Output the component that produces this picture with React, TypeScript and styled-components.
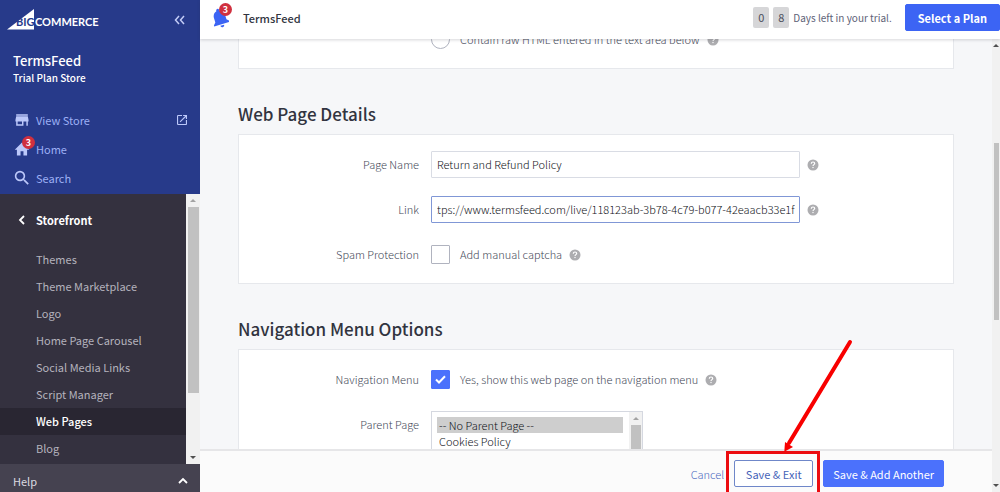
import React, { useEffect, useRef } from "react";
import styled, { createGlobalStyle, css } from "styled-components";

const GlobalStyle = createGlobalStyle`
  *, *::before, *::after { box-sizing: border-box; }
  body {
    margin: 0;
    color: #444857;
    background: #f6f7f9;
    font-family: "Noto Sans CJK SC", "Noto Sans", sans-serif;
    font-size: 11px;
    line-height: 20px;
  }
  button, input, select { font: inherit; margin: 0; }
  a { color: inherit; text-decoration: none; }
`;

const Shell = styled.div`
  display: grid;
  grid-template-columns: 200px minmax(0, 1fr);
  height: 100vh;
  overflow: hidden;
`;

/* ---------- sidebar ---------- */

const Sidebar = styled.aside`
  display: flex;
  flex-direction: column;
  min-height: 0;
  background: #273a8a;
`;

const Brand = styled.div`
  display: flex;
  align-items: center;
  justify-content: space-between;
  height: 39px;
  padding: 0 14px 0 6px;
`;

const IconButton = styled.button`
  display: flex;
  padding: 0;
  border: 0;
  background: none;
  color: #c3ccf7;
`;

const StoreInfo = styled.div`
  padding: 11px 13px 0;
  color: #fff;
`;

const StoreName = styled.div`
  font-size: 13px;
  line-height: 22px;
  font-weight: 500;
`;

const StorePlan = styled.div`
  font-size: 10px;
  line-height: 12px;
  font-weight: 500;
`;

const PrimaryNav = styled.nav`
  display: flex;
  flex-direction: column;
  padding: 21px 13px 2px 14px;
`;

const PrimaryLink = styled.a`
  display: flex;
  align-items: center;
  gap: 6px;
  height: 29px;
  color: #9db0f5;
  & > span:nth-child(2) { flex: 1; }
`;

const IconSlot = styled.span`
  position: relative;
  display: flex;
  color: #bcc8fa;
`;

const Badge = styled.span<{ $inset?: boolean }>`
  position: absolute;
  top: -5px;
  right: ${(p) => (p.$inset ? -3 : -5)}px;
  width: 13px;
  height: 13px;
  border-radius: 50%;
  background: #d0303f;
  color: #fff;
  font-size: 9px;
  line-height: 13px;
  font-weight: 700;
  text-align: center;
`;

const SubPanel = styled.div`
  display: flex;
  flex: 1;
  min-height: 0;
  background: #34313f;
`;

const SubNav = styled.nav`
  flex: 1;
  min-width: 0;
  overflow: hidden;
  padding-top: 16px;
`;

const SubTitle = styled.a`
  display: flex;
  align-items: center;
  gap: 7px;
  height: 20px;
  margin-bottom: 16px;
  padding-left: 14px;
  color: #fff;
  font-weight: 700;
`;

const SubLink = styled.a<{ $active?: boolean }>`
  display: block;
  height: 27px;
  padding-left: 36px;
  line-height: 27px;
  color: #b4b3bd;
  ${(p) => p.$active && css`
    color: #fff;
    background: #292632;
    font-weight: 500;
  `}
`;

const HelpBar = styled.button`
  display: flex;
  align-items: center;
  justify-content: space-between;
  height: 28px;
  flex: none;
  padding: 5px 12px 0 13px;
  border: 0;
  background: #454250;
  color: #dcdbe2;
  text-align: left;
`;

/* ---------- scrollbars ---------- */

const Track = styled.div<{ $width: number }>`
  display: flex;
  flex-direction: column;
  align-items: center;
  flex: none;
  width: ${(p) => p.$width}px;
  overflow: hidden;
  background: #f1f1f1;
`;

const ArrowCell = styled.span<{ $color: string; $down?: boolean }>`
  display: flex;
  align-items: center;
  justify-content: center;
  flex: none;
  height: 13px;
  &::before {
    content: "";
    border: 3px solid transparent;
    ${(p) => p.$down
      ? css`border-top-color: ${p.$color}; border-bottom: 0;`
      : css`border-bottom-color: ${p.$color}; border-top: 0;`}
  }
`;

const Spacer = styled.span<{ $grow: number }>`
  flex: ${(p) => p.$grow} 0 0;
`;

const Thumb = styled.span<{ $grow: number }>`
  flex: ${(p) => p.$grow} 0 0;
  width: calc(100% - 3px);
  background: #c1c1c1;
`;

/* ---------- top bar ---------- */

const Main = styled.div`
  display: flex;
  flex-direction: column;
  min-width: 0;
  min-height: 0;
`;

const TopBar = styled.header`
  display: flex;
  align-items: center;
  flex: none;
  height: 39px;
  padding: 0 0 4px 11px;
  background: #fff;
  box-shadow: 0 1px 3px rgba(49, 52, 64, 0.2);
  z-index: 1;
`;

const TopTitle = styled.span`
  flex: 1;
  margin-left: 14px;
  color: #313440;
  font-weight: 500;
`;

const Trial = styled.div`
  display: flex;
  align-items: center;
  gap: 4px;
  margin-right: 13px;
  color: #5e6378;
  font-size: 10px;
`;

const Digit = styled.span`
  width: 16px;
  height: 21px;
  border-radius: 2px;
  background: #d6d6d8;
  color: #4c4f5c;
  font-size: 11px;
  line-height: 21px;
  text-align: center;
`;

const Button = styled.button<{ $primary?: boolean }>`
  min-width: 79px;
  height: 27px;
  padding: 0 9px;
  border: 1px solid ${(p) => (p.$primary ? "#4b71fc" : "#6f87c9")};
  border-radius: 2px;
  background: ${(p) => (p.$primary ? "#4b71fc" : "#fff")};
  color: ${(p) => (p.$primary ? "#fff" : "#4562b8")};
  font-weight: 400;
  line-height: 20px;
  white-space: nowrap;
`;

const PlanButton = styled(Button)`
  padding: 0 12px;
  border-color: #3c64f4;
  background: #3c64f4;
  font-weight: 700;
`;

/* ---------- content ---------- */

const Body = styled.div`
  display: flex;
  flex: 1;
  min-height: 0;
`;

const Column = styled.div`
  display: flex;
  flex-direction: column;
  flex: 1;
  min-width: 0;
`;

const Viewport = styled.main`
  flex: 1;
  min-height: 0;
  overflow: hidden;
`;

const Form = styled.form`
  margin-top: -20px;
  padding: 0 38px;
  font-weight: 300;
`;

const Card = styled.section`
  display: flex;
  flex-direction: column;
  gap: 18px;
  padding: 16px 0 15px;
  border: 1px solid #e6e8ec;
  background: #fff;
`;

const OptionsCard = styled(Card)`
  padding: 6px 0 15px;
`;

const Heading = styled.h2`
  margin: 0;
  padding: 31px 0 7px;
  color: #313440;
  font-size: 17px;
  line-height: 27px;
  font-weight: 500;
`;

const Row = styled.div<{ $top?: boolean }>`
  display: grid;
  grid-template-columns: 180px minmax(0, 1fr);
  align-items: ${(p) => (p.$top ? "start" : "center")};
  column-gap: 12px;
  min-height: 27px;
`;

const Label = styled.label`
  padding-bottom: 2px;
  text-align: right;
`;

const ListLabel = styled(Label)`
  padding-top: 3px;
`;

const Field = styled.div`
  display: flex;
  align-items: center;
  gap: 7px;
`;

const ChoiceLabel = styled.label`
  display: flex;
  align-items: center;
  gap: 10px;
`;

const ChoiceText = styled.span`
  padding-bottom: 2px;
`;

const TextInput = styled.input<{ $focus?: boolean }>`
  width: 369px;
  max-width: 100%;
  height: 27px;
  padding: 0 4px 1px 5px;
  border: 1px solid ${(p) => (p.$focus ? "#8097d6" : "#d9dce4")};
  border-radius: 1px;
  outline: 0;
  background: #fff;
  color: #101218;
`;

const choiceBox = css`
  appearance: none;
  width: 19px;
  height: 19px;
  border: 1px solid #b0b3bf;
  background: #fff;
`;

const Radio = styled.input.attrs({ type: "radio" })`
  ${choiceBox}
  border-radius: 50%;
`;

const CheckWrap = styled.span`
  display: grid;
  & > * { grid-area: 1 / 1; place-self: center; }
  & > svg { pointer-events: none; }
`;

const Check = styled.input.attrs({ type: "checkbox" })`
  ${choiceBox}
  border-radius: 1px;
  &:checked {
    border-color: #4b71fc;
    background: #4b71fc;
  }
`;

const ListBox = styled.div`
  display: flex;
  width: 212px;
  border: 1px solid #d5d8e0;
  background: #fff;
`;

const PageSelect = styled.select`
  flex: 1;
  min-width: 0;
  height: 96px;
  padding: 5px 6px 0 5px;
  border: 0;
  outline: 0;
  background: #fff;
  color: #101218;
  overflow: hidden;
  scrollbar-width: none;
  option {
    min-height: 16px;
    padding: 0 2px;
    font-weight: 300;
    line-height: 16px;
  }
  option:checked {
    background: #cecece linear-gradient(#cecece, #cecece);
    color: #101218;
  }
`;

/* ---------- footer ---------- */

const Footer = styled.footer`
  display: flex;
  align-items: center;
  justify-content: flex-end;
  gap: 10px;
  flex: none;
  height: 43px;
  padding: 4px 48px 0 0;
  border-top: 2px solid #e6e6e8;
  background: #fbfbfb;
`;

const CancelLink = styled.a`
  color: #4a68c0;
  font-weight: 300;
`;

const Highlight = styled.span`
  position: relative;
  display: flex;
`;

const Marker = styled.svg`
  position: absolute;
  left: -9px;
  bottom: -9px;
  overflow: visible;
  pointer-events: none;
  z-index: 2;
`;

/* ---------- drawings ---------- */

const Logo = () => (
  <svg width="94" height="24" viewBox="0 0 94 24" role="img" aria-label="BigCommerce">
    <path d="M28 1V21.500H1Z" fill="#fff" />
    <text x="10" y="18" fontFamily="Lato, sans-serif" fontWeight="700" fontSize="11" fill="#273a8a">BIG</text>
    <text x="29" y="18" fontFamily="Lato, sans-serif" fontWeight="700" fontSize="11" fill="#fff">COMMERCE</text>
  </svg>
);

const StoreIcon = () => (
  <svg width="16" height="16" viewBox="1 1 22 22" fill="currentColor">
    <path d="M20 4H4v2h16V4zm1 10v-2l-1-5H4l-1 5v2h1v6h10v-6h4v6h2v-6h1zm-9 4H6v-4h6v4z" />
  </svg>
);

const HomeIcon = () => (
  <svg width="16" height="16" viewBox="1 1 22 22" fill="currentColor">
    <path d="M10 21v-6h4v6h5v-8h3L12 3 2 13h3v8z" />
  </svg>
);

const SearchIcon = () => (
  <svg width="16" height="16" viewBox="2 2 20 20" fill="currentColor">
    <path d="M15.500 14h-.79l-.28-.27A6.470 6.470 0 0 0 16 9.500 6.500 6.500 0 1 0 9.500 16c1.610 0 3.090-.59 4.230-1.570l.27.28v.79l5 4.990L20.490 19l-4.990-5zm-6 0C7.010 14 5 11.990 5 9.500S7.010 5 9.500 5 14 7.010 14 9.500 11.990 14 9.500 14z" />
  </svg>
);

const ExternalIcon = () => (
  <svg width="10" height="10" viewBox="3 3 18 18" fill="#bcc8fa">
    <path d="M19 19H5V5h7V3H5a2 2 0 0 0-2 2v14a2 2 0 0 0 2 2h14c1.100 0 2-.9 2-2v-7h-2v7zM14 3v2h3.590l-9.830 9.830 1.410 1.410L19 6.410V10h2V3h-7z" />
  </svg>
);

const CollapseIcon = () => (
  <svg width="12" height="10" viewBox="0 0 12 10" fill="none" stroke="currentColor" strokeWidth="1.500">
    <path d="M5 1 1.500 5 5 9M10 1 6.500 5 10 9" />
  </svg>
);

const BackIcon = () => (
  <svg width="15" height="10" viewBox="0 0 15 10" fill="none" stroke="currentColor" strokeWidth="1.800">
    <path d="M10 1 6 5 10 9" />
  </svg>
);

const UpIcon = () => (
  <svg width="10" height="7" viewBox="0 0 10 7" fill="none" stroke="#fff" strokeWidth="1.800">
    <path d="M1 6 5 2 9 6" />
  </svg>
);

const BellIcon = () => (
  <svg width="18" height="20" viewBox="0 0 18 20" fill="#3c64f4">
    <g transform="rotate(-17 9 10)">
      <path d="M9 0.500C9.900 .5 10.500 1.100 10.500 2v.6C13.200 3.300 14.800 5.600 14.800 8.300V13l2.200 2.300V16.500H1V15.300L3.200 13V8.300C3.200 5.600 4.800 3.300 7.500 2.600V2C7.500 1.100 8.100.5 9 .5Z" />
      <path d="M7 17.600h4a2 2 0 0 1-4 0Z" />
    </g>
  </svg>
);

const HelpIcon = () => (
  <svg width="12" height="12" viewBox="0 0 12 12" role="img" aria-label="Help">
    <circle cx="6" cy="6" r="5.500" fill="#adadb0" />
    <path d="M4.300 4.700C4.300 3.600 5 3 6 3s1.700.6 1.700 1.500C7.700 5.600 6 5.700 6 7" fill="none" stroke="#fff" strokeWidth="1.200" />
    <rect x="5.400" y="7.900" width="1.200" height="1.200" fill="#fff" />
  </svg>
);

const CheckIcon = () => (
  <svg width="11" height="9" viewBox="0 0 11 9" fill="none" stroke="#fff" strokeWidth="2">
    <path d="M1 4.500 4 7.500 10 1.200" />
  </svg>
);

const ArrowMarker = () => (
  <Marker width="93" height="152" viewBox="0 0 93 152" aria-hidden="true">
    <rect x="2.500" y="108.500" width="91" height="50" fill="none" stroke="#ec0c10" strokeWidth="3" />
    <path d="M125 -2 64 99" stroke="#f80000" strokeWidth="4" strokeLinecap="round" />
    <path d="M59.300 107.700 60 98 68 103Z" fill="#f80000" />
  </Marker>
);

const subLinks = [
  "Themes",
  "Theme Marketplace",
  "Logo",
  "Home Page Carousel",
  "Social Media Links",
  "Script Manager",
  "Web Pages",
  "Blog",
];

export default function App() {
  const linkRef = useRef<HTMLInputElement>(null);

  // The link field shows the end of its long address.
  useEffect(() => {
    const el = linkRef.current;
    if (el) el.scrollLeft = el.scrollWidth;
  }, []);

  return (
    <>
      <GlobalStyle />
      <Shell>
        <Sidebar>
          <Brand>
            <Logo />
            <IconButton aria-label="Collapse menu"><CollapseIcon /></IconButton>
          </Brand>
          <StoreInfo>
            <StoreName>TermsFeed</StoreName>
            <StorePlan>Trial Plan Store</StorePlan>
          </StoreInfo>
          <PrimaryNav>
            <PrimaryLink href="#store">
              <IconSlot><StoreIcon /></IconSlot>
              <span>View Store</span>
              <ExternalIcon />
            </PrimaryLink>
            <PrimaryLink href="#home">
              <IconSlot><HomeIcon /><Badge>3</Badge></IconSlot>
              <span>Home</span>
            </PrimaryLink>
            <PrimaryLink href="#search">
              <IconSlot><SearchIcon /></IconSlot>
              <span>Search</span>
            </PrimaryLink>
          </PrimaryNav>
          <SubPanel>
            <SubNav>
              <SubTitle href="#storefront"><BackIcon />Storefront</SubTitle>
              {subLinks.map((name) => (
                <SubLink key={name} href="#sub" $active={name === "Web Pages"}>{name}</SubLink>
              ))}
            </SubNav>
            <Track $width={14}>
              <ArrowCell $color="#a3a3a3" />
              <Thumb $grow={186} />
              <Spacer $grow={58} />
              <ArrowCell $color="#505050" $down />
            </Track>
          </SubPanel>
          <HelpBar>Help<UpIcon /></HelpBar>
        </Sidebar>

        <Main>
          <TopBar>
            <IconSlot><BellIcon /><Badge $inset>3</Badge></IconSlot>
            <TopTitle>TermsFeed</TopTitle>
            <Trial>
              <Digit>0</Digit>
              <Digit>8</Digit>
              <span>Days left in your trial.</span>
            </Trial>
            <PlanButton $primary>Select a Plan</PlanButton>
          </TopBar>
          <Body>
            <Column>
              <Viewport>
                <Form>
                  <OptionsCard>
                    <Row>
                      <span />
                      <Field>
                        <ChoiceLabel>
                          <Radio name="kind" />
                          <ChoiceText>Contain raw HTML entered in the text area below</ChoiceText>
                        </ChoiceLabel>
                        <HelpIcon />
                      </Field>
                    </Row>
                  </OptionsCard>

                  <Heading>Web Page Details</Heading>
                  <Card>
                    <Row>
                      <Label htmlFor="page-name">Page Name</Label>
                      <Field>
                        <TextInput id="page-name" defaultValue="Return and Refund Policy" />
                        <HelpIcon />
                      </Field>
                    </Row>
                    <Row>
                      <Label htmlFor="link">Link</Label>
                      <Field>
                        <TextInput
                          id="link"
                          ref={linkRef}
                          $focus
                          defaultValue="https://www.termsfeed.com/live/118123ab-3b78-4c79-b077-42eaacb33e1f"
                        />
                        <HelpIcon />
                      </Field>
                    </Row>
                    <Row>
                      <Label htmlFor="captcha">Spam Protection</Label>
                      <Field>
                        <ChoiceLabel>
                          <CheckWrap><Check id="captcha" /></CheckWrap>
                          <ChoiceText>Add manual captcha</ChoiceText>
                        </ChoiceLabel>
                        <HelpIcon />
                      </Field>
                    </Row>
                  </Card>

                  <Heading>Navigation Menu Options</Heading>
                  <Card>
                    <Row>
                      <Label htmlFor="nav-menu">Navigation Menu</Label>
                      <Field>
                        <ChoiceLabel>
                          <CheckWrap><Check id="nav-menu" defaultChecked /><CheckIcon /></CheckWrap>
                          <ChoiceText>Yes, show this web page on the navigation menu</ChoiceText>
                        </ChoiceLabel>
                        <HelpIcon />
                      </Field>
                    </Row>
                    <Row $top>
                      <ListLabel htmlFor="parent">Parent Page</ListLabel>
                      <ListBox>
                        <PageSelect id="parent" size={5} defaultValue="none">
                          <option value="none">-- No Parent Page --</option>
                          <option value="cookies">Cookies Policy</option>
                        </PageSelect>
                        <Track $width={13}>
                          <ArrowCell $color="#a3a3a3" />
                          <Thumb $grow={1} />
                        </Track>
                      </ListBox>
                    </Row>
                  </Card>
                </Form>
              </Viewport>
              <Footer>
                <CancelLink href="#cancel">Cancel</CancelLink>
                <Highlight>
                  <Button>Save &amp; Exit</Button>
                  <ArrowMarker />
                </Highlight>
                <Button $primary>Save &amp; Add Another</Button>
              </Footer>
            </Column>
            <Track $width={8}>
              <ArrowCell $color="#505050" />
              <Spacer $grow={91} />
              <Thumb $grow={177} />
              <Spacer $grow={159} />
              <ArrowCell $color="#505050" $down />
            </Track>
          </Body>
        </Main>
      </Shell>
    </>
  );
}
